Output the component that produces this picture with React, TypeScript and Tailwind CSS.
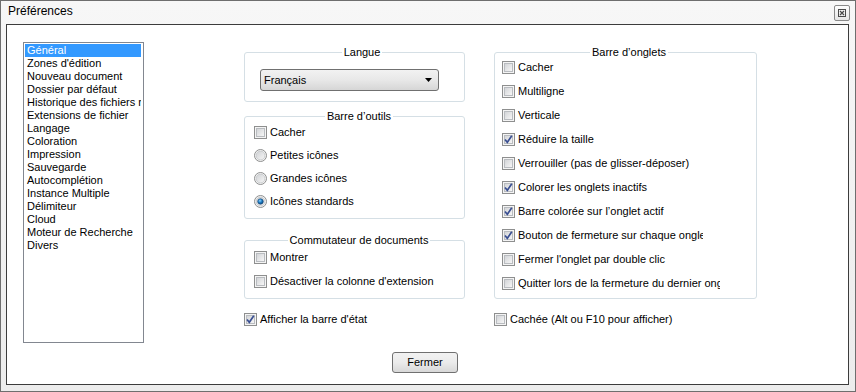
import type { ReactNode } from 'react';

const categories = [
  'Général',
  "Zones d'édition",
  'Nouveau document',
  'Dossier par défaut',
  'Historique des fichiers récents',
  'Extensions de fichier',
  'Langage',
  'Coloration',
  'Impression',
  'Sauvegarde',
  'Autocomplétion',
  'Instance Multiple',
  'Délimiteur',
  'Cloud',
  'Moteur de Recherche',
  'Divers',
];

const tabBarOptions: [string, boolean, string][] = [
  ['Cacher', false, 'w-[218px]'],
  ['Multiligne', false, 'w-[218px]'],
  ['Verticale', false, 'w-[218px]'],
  ['Réduire la taille', true, 'w-[218px]'],
  ['Verrouiller (pas de glisser-déposer)', false, 'w-[218px]'],
  ['Colorer les onglets inactifs', true, 'w-[218px]'],
  ['Barre colorée sur l’onglet actif', true, 'w-[218px]'],
  ['Bouton de fermeture sur chaque onglet', true, 'w-[201px]'],
  ["Fermer l'onglet par double clic", false, 'w-[218px]'],
  ['Quitter lors de la fermeture du dernier onglet', false, 'w-[218px]'],
];

const CheckBox = ({ checked, label, width }: { checked: boolean; label: string; width?: string }) => (
  <label className={`flex h-[13px] items-center gap-[3px] overflow-hidden whitespace-nowrap ${width ?? ''}`}>
    <span className="relative flex h-[13px] w-[13px] shrink-0 border border-[#8e8f8f] bg-[#f4f4f4] p-[1px]">
      <span className="h-full w-full border border-[#b9bcc0] bg-gradient-to-br from-[#d3d5d8] to-[#f6f6f6]" />
      {checked && (
        <svg className="absolute inset-0" width="11" height="11" viewBox="0 0 11 11">
          <path d="M2 5.5 L4.3 8.3 L8.8 1.8" fill="none" stroke="#3a4f92" strokeWidth="1.7" />
        </svg>
      )}
    </span>
    <span className="leading-[13px]">{label}</span>
  </label>
);

const Radio = ({ checked, label }: { checked: boolean; label: string }) => (
  <label className="flex h-[13px] items-center gap-[3px] whitespace-nowrap">
    <svg width="13" height="13" viewBox="0 0 13 13" className="shrink-0">
      <defs>
        <linearGradient id="rg" x1="0" y1="0" x2="1" y2="1">
          <stop offset="0" stopColor="#cfd1d4" />
          <stop offset="1" stopColor="#f7f7f7" />
        </linearGradient>
        <radialGradient id="rd" cx="0.4" cy="0.35" r="0.7">
          <stop offset="0" stopColor="#8fd3ff" />
          <stop offset="0.5" stopColor="#1d7cc2" />
          <stop offset="1" stopColor="#0b3f73" />
        </radialGradient>
      </defs>
      <circle cx="6.5" cy="6.5" r="6" fill="#f4f4f4" stroke="#8e8f8f" />
      <circle cx="6.5" cy="6.5" r="4.4" fill="url(#rg)" stroke="#c3c5c8" strokeWidth="0.8" />
      {checked && <circle cx="6.5" cy="6.5" r="2.8" fill="url(#rd)" stroke="#1c4a78" strokeWidth="0.6" />}
    </svg>
    <span className="leading-[13px]">{label}</span>
  </label>
);

const Group = ({ title, className, children }: { title: string; className?: string; children: ReactNode }) => (
  <fieldset className={`rounded-[3px] border border-[#d5dfe5] ${className ?? ''}`}>
    <legend className="mx-auto px-[2px] leading-[13px]">{title}</legend>
    {children}
  </fieldset>
);

export default function App() {
  return (
    <div
      className="flex h-[392px] w-[856px] flex-col border border-[#6e6e6e] bg-gradient-to-b from-[#f7f7f7] to-[#ececec] text-[11px] text-black"
      style={{ fontFamily: '"Liberation Sans", Arial, sans-serif' }}
    >
      <div className="flex h-[23px] shrink-0 items-start justify-between pl-[7px] pr-[5px]">
        <span className="pt-[3px] text-[12px] leading-[14px]">Préférences</span>
        <button className="mt-[4px] flex h-[16px] w-[16px] items-center justify-center rounded-[2px] border border-[#8a8a8a] bg-gradient-to-b from-[#fdfdfd] to-[#e6e6e6]">
          <svg width="10" height="10" viewBox="0 0 10 10">
            <rect x="1.5" y="1.5" width="7" height="7" fill="none" stroke="#4a4a4a" />
            <path d="M3 3 L7 7 M7 3 L3 7" stroke="#4a4a4a" strokeWidth="1.2" />
          </svg>
        </button>
      </div>

      <div className="mb-[6px] ml-[5px] mr-[6px] flex flex-1 flex-col border border-[#3c3c3c] bg-white pl-[16px] pt-[17px]">
        <div className="flex items-start">
          <ul className="h-[301px] w-[121px] shrink-0 overflow-hidden border border-[#828790] p-[1px] pr-[2px]">
            {categories.map((c, i) => (
              <li
                key={c}
                className={`h-[13px] overflow-hidden whitespace-nowrap pl-[2px] leading-[13px] ${i === 0 ? 'bg-[#3399ff] text-white' : ''}`}
              >
                {c}
              </li>
            ))}
          </ul>

          <div className="ml-[100px] mt-[4px] flex w-[221px] flex-col">
            <Group title="Langue" className="pb-[10px] pl-[15px] pt-[10px]">
              <div className="flex h-[22px] w-[179px] items-center justify-between rounded-[3px] border border-[#707070] bg-gradient-to-b from-[#f2f2f2] via-[#e8e8e8] to-[#d6d6d6] pl-[3px] pr-[6px]">
                <span>Français</span>
                <svg width="7" height="4" viewBox="0 0 7 4">
                  <path d="M0 0 H7 L3.5 4 Z" fill="#000" />
                </svg>
              </div>
            </Group>

            <Group title="Barre d’outils" className="mt-[8px] flex flex-col gap-[10px] pb-[10px] pl-[9px] pt-[3px]">
              <CheckBox checked={false} label="Cacher" />
              <Radio checked={false} label="Petites icônes" />
              <Radio checked={false} label="Grandes icônes" />
              <Radio checked label="Icônes standards" />
            </Group>

            <Group title="Commutateur de documents" className="mt-[15px] flex flex-col gap-[11px] pb-[10px] pl-[9px] pt-[4px]">
              <CheckBox checked={false} label="Montrer" />
              <CheckBox checked={false} label="Désactiver la colonne d'extension" />
            </Group>

            <div className="mt-[14px]">
              <CheckBox checked label="Afficher la barre d'état" />
            </div>
          </div>

          <div className="ml-[29px] mt-[4px] flex w-[263px] flex-col">
            <Group title="Barre d’onglets" className="flex flex-col gap-[11px] pb-[8px] pl-[7px] pt-[2px]">
              {tabBarOptions.map(([label, checked, width]) => (
                <CheckBox key={label} checked={checked} label={label} width={width} />
              ))}
            </Group>

            <div className="mt-[14px]">
              <CheckBox checked={false} label="Cachée (Alt ou F10 pour afficher)" />
            </div>
          </div>
        </div>

        <button className="ml-[369px] mt-[9px] flex h-[21px] w-[66px] items-center justify-center rounded-[3px] border border-[#707070] bg-gradient-to-b from-[#f2f2f2] via-[#ebebeb] to-[#d8d8d8] text-[11px]">
          Fermer
        </button>
      </div>
    </div>
  );
}
